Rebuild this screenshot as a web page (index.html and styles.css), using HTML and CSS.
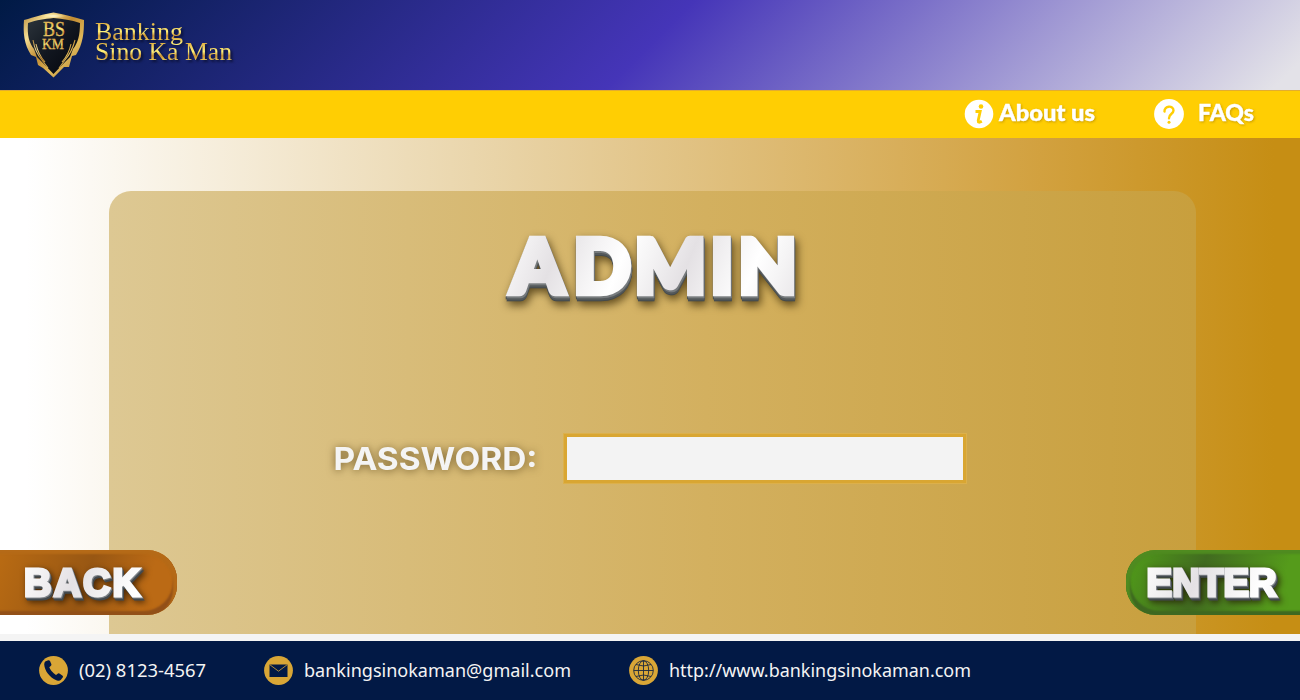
FILE: index.html
```html
<!DOCTYPE html>
<html lang="en">
<head>
<meta charset="utf-8">
<title>Banking Sino Ka Man - Admin</title>
<link rel="stylesheet" href="styles.css">
</head>
<body>
<div class="page">
  <header class="header">
    <svg class="brand" width="240" height="90" viewBox="0 0 240 90">
      <defs>
        <linearGradient id="gold" x1="0" y1="0" x2="1" y2="1"><stop offset="0" stop-color="#b5883a"/><stop offset=".22" stop-color="#f6df94"/><stop offset=".45" stop-color="#c18b32"/><stop offset=".68" stop-color="#e0b95a"/><stop offset="1" stop-color="#a8782a"/></linearGradient>
        <linearGradient id="letters" x1="0" y1="0" x2="0" y2="1"><stop offset=".15" stop-color="#dca637"/><stop offset=".5" stop-color="#fff07a"/><stop offset=".65" stop-color="#c99032"/><stop offset=".9" stop-color="#ffef75"/></linearGradient>
        <linearGradient id="black" x1="0" y1="0" x2="1" y2="1"><stop offset="0" stop-color="#2c343b"/><stop offset=".5" stop-color="#11161f"/><stop offset="1" stop-color="#03050c"/></linearGradient>
        <radialGradient id="glint"><stop offset="0" stop-color="#fffbe0"/><stop offset="1" stop-color="#fff0a000"/></radialGradient>
      </defs>
      <path fill="url(#gold)" d="M24 20C35 17 43 14 53.500 12.500C64 14 73 17 84 20C84 33 83 44 76 55L72 56L69 67L64 67L53.500 77.500L43 68L38 65L36 57L31 55C24 44 23 33 24 20Z"/>
      <path fill="url(#black)" d="M28 23C37 20 44 19 53.500 18C63 19 71 20 80 23C80 35 78 43 73 49L70 57L63 64L53.500 74L44 64L37 57L34 49C29 43 27 35 28 23Z"/>
      <ellipse cx="53.500" cy="16" rx="12" ry="2.500" fill="url(#glint)"/>
      <path fill="none" stroke="url(#gold)" stroke-width="1.100" d="M33 40Q35 52 42 60L48 68M36 44Q38 54 45 62M75 40Q72 52 65 60L59 68M71 44Q69 54 62 62"/>
      <text class="crest" x="43" y="36" textLength="22" lengthAdjust="spacingAndGlyphs" font-size="20">BS</text>
      <text class="crest" x="42" y="49" textLength="22" lengthAdjust="spacingAndGlyphs" font-size="14">KM</text>
      <g class="wordmark">
        <text x="95" y="40" textLength="88" lengthAdjust="spacingAndGlyphs">Banking</text>
        <text x="95" y="60" textLength="137" lengthAdjust="spacingAndGlyphs">Sino Ka Man</text>
      </g>
    </svg>
  </header>
  <nav class="nav">
    <a class="nav-link">
      <svg width="30" height="30" viewBox="0 0 30 30"><circle cx="15" cy="15" r="14.300" fill="#fff"/><circle cx="17" cy="7.500" r="2.300" fill="#ffce03"/><path d="M11.500 12.500H16.200L14.200 21.500Q14 24.500 17.800 22.300" fill="none" stroke="#ffce03" stroke-width="2.800"/></svg>
      <svg class="nav-text" width="98" height="30"><text x="0" y="22" textLength="96" lengthAdjust="spacingAndGlyphs">About us</text></svg>
    </a>
    <a class="nav-link faq">
      <svg width="30" height="30" viewBox="0 0 30 30"><circle cx="15" cy="15" r="14.900" fill="#fff"/><path d="M10.500 12.500C10 6.500 19.500 6 19.500 11.500C19.500 15 15 14.500 15 19.200" fill="none" stroke="#ffce03" stroke-width="2.400" stroke-linecap="round"/><circle cx="15" cy="23.200" r="1.500" fill="#ffce03"/></svg>
      <svg class="nav-text" width="58" height="30"><text x="-1" y="22" textLength="56" lengthAdjust="spacingAndGlyphs">FAQs</text></svg>
    </a>
  </nav>
  <main class="main">
    <section class="panel">
      <svg class="title embossed" width="310" height="90" viewBox="0 0 310 90">
        <defs><linearGradient id="silver" gradientUnits="userSpaceOnUse" x1="0" y1="0" x2="58" y2="24" spreadMethod="reflect"><stop offset="0" stop-color="#fff"/><stop offset=".4" stop-color="#f5f4f5"/><stop offset="1" stop-color="#e4e1e4"/></linearGradient></defs>
        <text x="12 74.500 135.500 211.500 239.500" y="65.500">ADMIN</text>
      </svg>
      <form class="form">
        <svg width="225" height="50" viewBox="0 0 225 50" class="label"><text x="7.500" y="36" textLength="204" lengthAdjust="spacingAndGlyphs">PASSWORD:</text></svg>
        <input class="password" type="password" aria-label="Password">
      </form>
    </section>
    <button class="action back">
      <svg class="embossed small" width="136" height="56"><text x="8" y="41" textLength="116">BACK</text></svg>
    </button>
    <button class="action enter">
      <svg class="embossed small" width="144" height="56"><text x="8.500" y="41" textLength="130">ENTER</text></svg>
    </button>
  </main>
  <footer class="footer">
    <div class="contact phone">
      <svg width="29" height="29" viewBox="0 0 29 29"><circle cx="14.500" cy="14.500" r="14.400" fill="#d9a636"/><path fill="#021945" d="M6.200 5.500L9.200 4.200Q10.400 4 11 5L12.400 8.200Q12.600 9.200 11.700 10L10.300 11.200Q12 15.800 17 19L19 17.600Q20 17 20.800 17.700L23.600 19.700Q24.500 20.600 23.700 21.600L21.700 24.100Q20.500 25.300 18 24.500C10.500 21.500 5.800 15 5.200 8.500Q5.200 6.400 6.200 5.500Z"/></svg>
      <svg width="130" height="30"><text x="0" y="21.500" textLength="127" lengthAdjust="spacingAndGlyphs">(02) 8123-4567</text></svg>
    </div>
    <div class="contact mail">
      <svg width="29" height="29" viewBox="0 0 29 29"><circle cx="14.500" cy="14.500" r="14.400" fill="#d9a636"/><path fill="#021945" d="M5.500 8.500H23.500V21H5.500Z"/><path d="M5.800 8.700L14.500 15.200L23.200 8.700" fill="none" stroke="#d9a636" stroke-width=".8"/></svg>
      <svg width="270" height="30"><text x="0" y="21.500" textLength="267" lengthAdjust="spacingAndGlyphs">bankingsinokaman@gmail.com</text></svg>
    </div>
    <div class="contact web">
      <svg width="29" height="29" viewBox="0 0 29 29"><circle cx="14.500" cy="14.500" r="14.400" fill="#d9a636"/><g fill="none" stroke="#1c2840" stroke-width=".9"><circle cx="14.500" cy="14.500" r="9.800"/><ellipse cx="14.500" cy="14.500" rx="5.200" ry="9.800"/><path d="M14.500 4.700V24.300M4.700 14.500H24.300M7 8.500Q14.500 11.500 22 8.500M7 20.500Q14.500 17.500 22 20.500"/></g></svg>
      <svg width="306" height="30"><text x="0" y="21.500" textLength="302" lengthAdjust="spacingAndGlyphs">http://www.bankingsinokaman.com</text></svg>
    </div>
  </footer>
</div>
</body>
</html>
```
FILE: styles.css
```css
* { box-sizing: border-box; }
body { margin: 0; font-family: "Lato", sans-serif; }
svg { display: block; flex: none; overflow: visible; }
.page { width: 1300px; height: 700px; overflow: hidden; display: flex; flex-direction: column; }
.header { height: 90px; background: linear-gradient(135deg, #001a45 0%, #4535b8 50%, #e3e2e8 98%); }
.crest { font-family: "Liberation Serif", serif; fill: url(#letters); stroke: #e0bd68; stroke-width: .3px; }
.wordmark { font: 26px "Liberation Serif", serif; fill: url(#letters); filter: drop-shadow(2px 2px 1px #080c2bcc); }
.nav { height: 48px; background: #ffce03; border-top: 1px solid #e2ad30; display: flex; justify-content: flex-end; align-items: center; padding: 0 43px 2px 0; }
.nav-link { display: flex; align-items: center; gap: 5px; }
.nav-link.faq { margin-left: 57px; gap: 15px; }
.nav-text { font-size: 23px; font-weight: 900; fill: #fff; stroke: #fff; stroke-width: .4px; filter: drop-shadow(1px 1px 1px #a47b0090); }
.main { position: relative; height: 496px; padding: 53px 104px 0 109px; background: linear-gradient(90deg, #fff 0%, #fff 2%, #e9d4a8 38%, #d2a13f 80%, #c68e14 98%); }
.panel { height: 443px; border-radius: 22px 22px 0 0; background: linear-gradient(90deg, #ddc893, #d3b05f 55%, #c89f3d); padding-top: 36px; }
.title { margin-left: 390px; }
.embossed { font-weight: 900; font-size: 75px; fill: url(#silver); stroke: url(#silver); stroke-width: 6.5px; filter: drop-shadow(1px 2px 0 #777b7d) drop-shadow(0 2px 0 #53585a) drop-shadow(0 1px 0 #444a4c) drop-shadow(2px 4px 4px #302000b0); }
.embossed.small { font-size: 38px; stroke-width: 3px; filter: drop-shadow(1px 1px 0 #7d8287) drop-shadow(1px 2px 0 #42494e) drop-shadow(2px 2px 3px #201000b0); }
.form { display: flex; margin: 117px 0 0 217px; }
.label { font: 700 31px "Inter", sans-serif; fill: #f4f4f4; filter: drop-shadow(0 1px 4px #594316c0); }
.password { margin: 0 0 0 13px; width: 402px; height: 49px; padding: 0 8px; border: 3px solid #d9a632; outline: 0; background: #f3f3f3; box-shadow: 0 0 0 1px #dcb04b; font: 24px "Open Sans", sans-serif; }
.action { position: absolute; bottom: 19px; height: 65px; border: 0; padding: 0; display: flex; align-items: center; }
.back { left: 0; width: 177px; padding-left: 16px; border-radius: 0 30px 30px 0; background: linear-gradient(110deg, #b96b13, #985713 48%, #bb6a15 80%); box-shadow: inset -4px 4px 2px #b56a17, inset -4px -4px 2px #925018; }
.enter { right: 0; width: 174px; padding-left: 12px; border-radius: 30px 0 0 30px; background: linear-gradient(110deg, #529e19, #416b20 42%, #559b1b 85%); box-shadow: inset 4px 4px 2px #4f8b20, inset 4px -4px 2px #3e6821; }
.footer { height: 66px; border-top: 7px solid #f4f4f4; background: #021945; display: flex; align-items: center; padding: 0 0 1px 39px; font: 18.500px "Noto Sans", sans-serif; fill: #f4f4f4; }
.contact { display: flex; align-items: center; gap: 11px; }
.mail { margin-left: 55px; }
.web { margin-left: 55px; }
```
